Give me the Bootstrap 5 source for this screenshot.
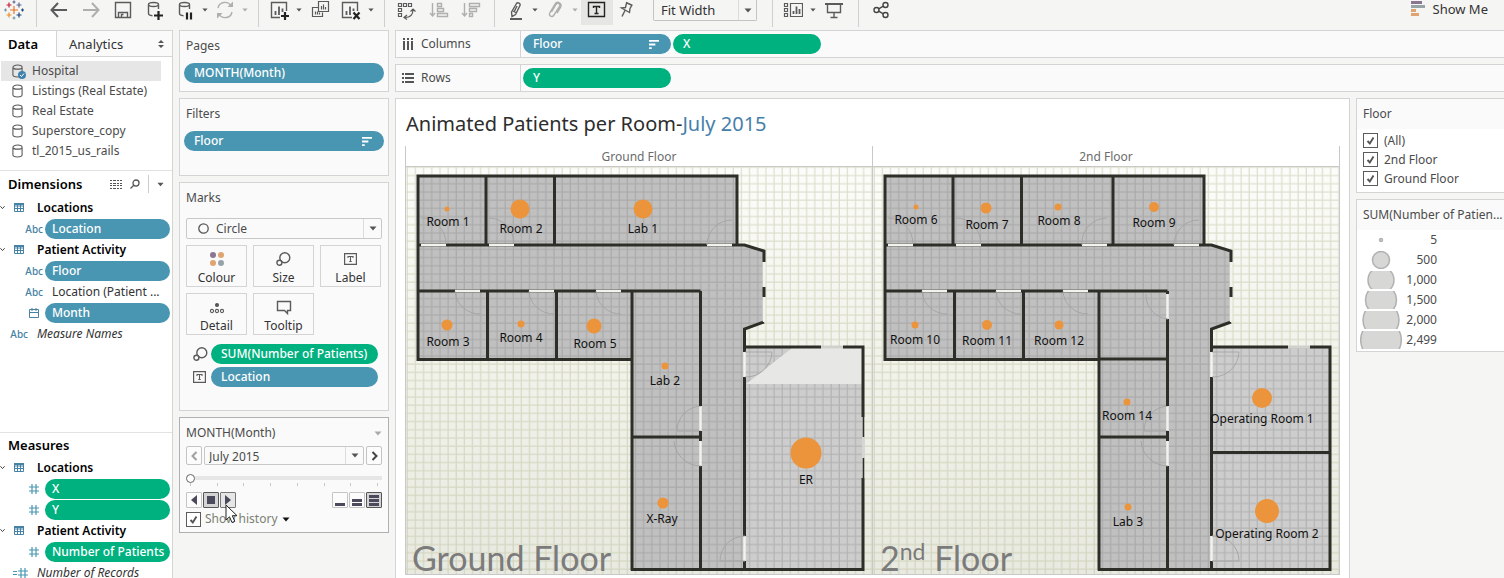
<!DOCTYPE html>
<html lang="en-GB">
<head>
<meta charset="utf-8">
<meta name="viewport" content="width=device-width, initial-scale=1">
<title>Animated Patients per Room</title>
<link href="https://cdn.jsdelivr.net/npm/bootstrap@5.3.0/dist/css/bootstrap.min.css" rel="stylesheet">
<style>
  :root { --line:#d4d4d4; --blue:#4996b2; --green:#00b180; --ink:#4b4b4b; }
  body { font-family:"Noto Sans","Open Sans",sans-serif; font-size:12px; line-height:20px; color:var(--ink); background:#f5f5f3; }
  svg { display:block; flex:none; }
  .ico { fill:none; stroke:#5b5b5b; stroke-width:1.4; }
  .app { height:100vh; overflow:hidden; }

  /* toolbar */
  .toolbar { height:30px; }
  .tool { width:32px; height:25px; padding:0; border:0; border-radius:0; display:flex; justify-content:center; align-items:flex-start; }
  .tool.mid { width:28px; }
  .tool.drop { width:12px; padding-top:8px; }
  .tool.on { background:#e6e6e4; }
  .rule { width:1px; height:27px; background:#cfcfcf; margin:0 6px 0 7px; }
  .rule.far { margin-left:11px; }
  .faded { opacity:.45; }
  .fit { width:104px; height:21px; margin-left:12px; margin-right:8px; border:1px solid #c4c4c4; border-top:0; border-radius:0 0 2px 2px; position:relative; }
  .pick { appearance:none; border:0; background:transparent; width:100%; height:100%; padding:0 24px 0 7px; color:var(--ink); outline:0; }
  .fit .pick { font-size:13px; padding-bottom:4px; color:#333; }
  .arrow { position:absolute; right:0; top:0; bottom:0; width:18px; border-left:1px solid #dcdcdc; display:flex; align-items:center; justify-content:center; pointer-events:none; }
  .showme { font-size:13px; color:#333; padding:0; border:0; line-height:18px; }

  /* data pane */
  .datapane { width:173px; background:#fff; border:solid var(--line); border-width:1px 1px 0 0; }
  .tab { height:26px; border:0; background:transparent; padding:0 8px; font-size:13px; color:#333; text-align:left; }
  .tab.current { width:56px; font-weight:600; color:#000; }
  .tab.other { background:#fafafa; border:solid var(--line); border-width:0 0 1px 1px; padding-left:12px; }
  .source { height:20px; margin:0 11px 0 1px; padding-left:11px; color:var(--ink); text-decoration:none; }
  .source svg { margin-right:6px; }
  .source.current { background:#e6e6e6; }
  .sources { height:114px; padding-top:4px; border-bottom:1px solid #e2e2e2; }
  .heading { font-size:13px; font-weight:600; color:#000; height:26px; padding-left:8px; }
  .divider { width:1px; height:18px; background:#ccc; margin:0 8px; }
  .measures { height:146px; border-top:1px solid #e2e2e2; }
  .measures .heading { height:24px; }
  .tree { list-style:none; margin:0; padding:0; }
  .tree li { height:21px; display:flex; align-items:center; color:#333; }
  .tree .group { font-weight:600; color:#000; gap:9px; }
  .tree .group span { padding-left:4px; }
  .tree .type { width:45px; padding-right:2px; display:flex; justify-content:flex-end; font-size:10px; font-weight:500; color:#4682a4; }
  .tree .type.glyph { padding-right:6px; }
  .tree .calc .type { width:30px; margin-right:7px; }
  .tree .calc { font-style:italic; }
  .tree .plain { padding-left:7px; white-space:nowrap; }
  .pill { height:20px; border:0; border-radius:10px; color:#fff; font-weight:500; padding:0 8px 0 10px; display:flex; align-items:center; justify-content:space-between; line-height:20px; white-space:nowrap; }
  .pill.dim { background:var(--blue); }
  .pill.mea { background:var(--green); }
  .tree .pill { width:125px; padding:0 7px; }

  /* cards */
  .cards { width:210px; margin-left:6px; gap:6px; }
  .panel { background:#fafafa; border:1px solid var(--line); padding:5px 4px; }
  .panel > .pill { margin-top:7px; }
  .panel > h2, .legend h2 { font-size:12px; line-height:20px; font-weight:400; margin:0; padding:0 2px; color:var(--ink); }
  .markbtn { width:61px; height:42px; background:#fafafa; border:1px solid var(--line); border-radius:0; color:#333; padding:4px 0 0; font-size:12px; line-height:16px; display:flex; flex-direction:column; align-items:center; justify-content:space-between; }
  .grid3 { display:grid; grid-template-columns:repeat(3,61px); gap:6px; margin-top:6px; }
  .encoding { margin-top:3px; gap:3px; padding:0 4px 0 7px; }
  .grid3 + .encoding { margin-top:9px; }
  .encoding svg { width:15px; }
  .box { border:1px solid #c8c8c8; position:relative; border-radius:2px; }
  .step { width:16px; height:19px; padding:0; border:1px solid #c4c4c4; background:#fcfcfc; border-radius:2px; display:flex; align-items:center; justify-content:center; }
  .play { width:16px; height:16px; padding:0; border:1px solid #c4c4c4; background:#fcfcfc; border-radius:1px; display:flex; align-items:center; justify-content:center; }
  .play.on { background:#d4d4d4; border-color:#555; }
  .play.hot { background:#e6e6e6; border-color:#777; }
  .slider { appearance:none; width:100%; height:10px; margin:8px 0 0; display:block; background:linear-gradient(#e6e6e6,#e6e6e6) center/100% 4px no-repeat; }
  .slider::-webkit-slider-thumb { appearance:none; width:9px; height:9px; border:1px solid #666; border-radius:50%; background:#fff; }
  .ticks { height:3px; margin:0 4px 6px; }
  .ticks i { width:1px; background:#c8c8c8; }
  .tick { appearance:none; flex:none; width:15px; height:15px; margin:0; border:1px solid #5b5b5b; background:#fff url("data:image/svg+xml,%3Csvg xmlns='http://www.w3.org/2000/svg' viewBox='0 0 13 13'%3E%3Cpath d='M3.5 7l2.3 2.5L9.5 3.5' fill='none' stroke='%23555' stroke-width='1.9'/%3E%3C/svg%3E") center/13px no-repeat; }
  .history { gap:4px; margin-top:2px; color:#7a7f72; line-height:18px; }
  .cursor { position:absolute; left:45px; top:86px; }

  /* shelves and view */
  .shelf { height:28px; background:#fafafa; border:1px solid var(--line); border-right:0; gap:2px; }
  .shelf .shelfname { width:125px; height:26px; border-right:1px solid var(--line); padding-left:6px; gap:7px; }
  .shelf .pill { width:148px; }
  .view { background:#fff; border:1px solid var(--line); border-bottom:0; padding:11px 9px 0; }
  .view h1 { font-size:20px; line-height:28px; font-weight:400; color:#2d2d2d; margin:0 0 8px; padding-left:1px; }
  .view h1 span { color:#4680aa; }
  .panes { border-right:1px solid #c8c8c8; border-bottom:1px solid #c8c8c8; }
  .pane { border-left:1px solid #c8c8c8; }
  .pane h3 { font-size:12px; line-height:18px; height:21px; padding-top:2px; font-weight:400; color:#6b6b6b; margin:0; text-align:center; border-bottom:1px solid #c8c8c8; }
  .pane svg { width:100%; height:auto; overflow:visible; }
  .plan text { font:12px "Noto Sans","Open Sans",sans-serif; fill:#111; text-anchor:middle; }
  .plan text.floorname { font:34px Lato,sans-serif; fill:#7b7b7b; text-anchor:start; }
  .plan text .sup { font-size:23px; }
  .marks circle { fill:#ec943c; }
  .aside { width:148px; gap:6px; }
  .legend { background:#fff; border:1px solid var(--line); border-right:0; }
  .legend h2 { background:#fafafa; padding:5px 0 5px 6px; height:30px; white-space:nowrap; }
  .legend .choices { padding:2px 6px 4px; }
  .legend label { height:19px; gap:6px; }
  .sizes { list-style:none; margin:0; padding:0 0 1px 3px; }
  .sizes li { height:20px; display:flex; align-items:center; }
  .sizes span { width:35px; text-align:right; }
  .sizes circle { fill:#d7d7d5; stroke:#b2b2b2; stroke-width:1.5; }
</style>
</head>
<body>
<svg width="0" height="0" class="position-absolute" aria-hidden="true">
  <symbol id="caret" viewBox="0 0 8 5"><path d="M.5.5h7L4 4.5z"/></symbol>
  <symbol id="db" viewBox="0 0 12 15"><path d="M1 3.3v8.4C1 13 3.200 14 6 14s5-1 5-2.300V3.300M1 3.300C1 2 3.200 1 6 1s5 1 5 2.300S8.800 5.500 6 5.500 1 4.600 1 3.300z" fill="none" stroke="#5b5b5b" stroke-width="1.200"/></symbol>
  <symbol id="sort" viewBox="0 0 11 10"><path d="M0 1h11M0 5h7M0 9h3" stroke="#fff" stroke-width="2"/></symbol>
  <symbol id="chev" viewBox="0 0 6 5"><path d="M.5 1L3 3.800 5.500 1" fill="none" stroke="#444" stroke-width="1.200"/></symbol>
  <symbol id="tbl" viewBox="0 0 10 9"><path d="M.5.5h9v8h-9zM.5 3h9M.5 5.500h9M3.500 2v6.500M6.500 2v6.500" fill="none" stroke="#4682a4"/><path d="M0 0h10v2H0z" fill="#4682a4"/></symbol>
  <symbol id="hash" viewBox="0 0 10 10"><path d="M3 0v10M7 0v10M0 3h10M0 7h10" fill="none" stroke="#4996b2" stroke-width="1.200"/></symbol>
  <symbol id="size" viewBox="0 0 15 14"><circle cx="8.800" cy="5.800" r="5"/><circle cx="3.400" cy="10.700" r="2.500" fill="#fafafa"/></symbol>
  <symbol id="tlabel" viewBox="0 0 13 12"><path d="M.5.5h12v11H.5z"/><path d="M4 5V3.500h5V5M6.500 3.500v5M5.300 8.500h2.400" stroke-width="1.100"/></symbol>

  <pattern id="tiles" width="8.150" height="8.200" patternUnits="userSpaceOnUse" x="408" y="170"><path d="M7.500 0v8.200M0 5.500h8.150" stroke="#b9bc98" stroke-opacity=".45" stroke-width="1.200" fill="none"/></pattern>
  <pattern id="floortiles" width="8.150" height="8.200" patternUnits="userSpaceOnUse" x="408" y="170"><path d="M7.500 0v8.200M0 5.500h8.150" stroke="#777" stroke-opacity=".3" stroke-width="1.200" fill="none"/></pattern>
  <linearGradient id="lawn" x2="0" y2="1"><stop offset="0" stop-color="#fcfcfa"/><stop offset=".5" stop-color="#f1f2ea"/><stop offset="1" stop-color="#e8e9e0"/></linearGradient>

  <!-- floor surface shared by both storeys -->
  <g id="ground">
    <path d="M406 167h466v407H406z" fill="url(#lawn)"/>
    <path d="M406 167h466v407H406z" fill="url(#tiles)"/>
    <path d="M418 176h319v69h8l19 6v71l-19 7v241H632V360H418z" fill="#c0c0c0"/>
    <path d="M745 347h118v223H745z" fill="#cdcdcd"/>
    <path d="M418 176h319v69h8l19 6v71l-19 7v18h118v223H632V360H418z" fill="url(#floortiles)"/>
  </g>
  <g id="walls" fill="none" stroke="#2e2e28" stroke-width="3">
    <path d="M418 361V176H737V245M418 245h326.500l19.500 6v11M764 287v10M764 322l-19.500 7v23M744.500 377v159M744.500 561v8"/>
    <path d="M486 176v69M418 291h282.500M487.500 291v69M556.500 291v69M632 291v279.500M418 359.500H632M700.500 466v104M632 437h68.500"/>
    <path d="M744.500 347H821M843 347h20v70M863 478v91.500H631"/>
    <g stroke="#f2f2ee"><path d="M421 245h25M489 245h25M455 291h25M529 291h25M596 291h25M764 262v25M764 297v25M744.500 352v25M744.500 536v25M700.500 406v25M700.500 441v25" stroke-width="2.500"/><path d="M821 347h22" stroke="#d0d0cc"/></g>
    <g stroke="#a0a0a0" stroke-width="1" stroke-opacity=".8"><path d="M421 218a25 26 0 0 1 25 26M489 218a25 26 0 0 1 25 26M455 291a25 24 0 0 0 25 23M529 291a25 24 0 0 0 25 23M596 291a25 24 0 0 0 25 23M701 406a25 25 0 0 0-24 25h24M701 466a27 27 0 0 1-27-25M745 352h27a26 26 0 0 1-27 25"/></g>
  </g>
</svg>

<div class="app d-flex flex-column">
  <header class="toolbar d-flex align-items-start flex-shrink-0" role="toolbar" aria-label="Toolbar">
    <button class="tool mid btn" aria-label="Start page"><svg width="20" height="20" viewBox="0 0 20 20" fill="none" stroke-width="1.200"><path d="M10 6v8M6 10h8" stroke="#e8762c"/><path d="M5 2.500v5M2.500 5h5" stroke="#c72037"/><path d="M15 2.500v5M12.500 5h5M10 .5v3M8.500 2h3" stroke="#5b6591"/><path d="M5 12.500v5M2.500 15h5" stroke="#eb912c"/><path d="M15 12.500v5M12.500 15h5M17 10h3M18.500 8.500v3" stroke="#1f447e"/><path d="M0 10h3M1.500 8.500v3M10 16.500v3M8.500 18h3" stroke="#7199a6"/></svg></button>
    <span class="rule ms-2"></span>
    <button class="tool btn" aria-label="Undo"><svg class="ico" width="20" height="20" style="stroke-width:2"><path d="M18 10H3M9 3L2.500 10 9 17"/></svg></button>
    <button class="tool btn" aria-label="Redo"><svg class="ico faded" width="20" height="20" style="stroke-width:2"><path d="M2 10h15M11 3l6.500 7L11 17"/></svg></button>
    <button class="tool btn" aria-label="Save"><svg class="ico" width="20" height="20"><path d="M2.500 2.500h15v15h-15zM5.500 17.500v-5h9v5M8.500 17.500v-3h2"/></svg></button>
    <button class="tool btn" aria-label="New data source"><svg class="ico" width="20" height="20"><path d="M3.500 4.500v9c0 1.500 2 2 4 2.200M13.500 9V4.500M3.500 4.500C3.500 3 5.500 2.500 8.500 2.500s5 .5 5 2-2 2-5 2-5-.5-5-2z"/><path d="M13.500 11v9M9 15.500h9" stroke="#222" stroke-width="2.200"/></svg></button>
    <button class="tool mid btn" aria-label="Pause auto updates"><svg class="ico" width="20" height="20"><path d="M4.500 4.500v9c0 1.500 2 2 4 2.200M14.500 9V4.500M4.500 4.500c0-1.500 2-2 5-2s5 .5 5 2-2 2-5 2-5-.5-5-2z"/><path d="M12 12.500v7M16 12.500v7" stroke="#222" stroke-width="2.200"/></svg></button>
    <button class="tool drop btn" aria-label="Update options"><svg width="6" height="4" fill="#555"><use href="#caret"/></svg></button>
    <button class="tool mid btn" aria-label="Refresh"><svg class="ico faded" width="20" height="20"><path d="M3 8a7 7 0 0 1 13-2M17 12a7 7 0 0 1-13 2"/><path d="M12.500 7H18V1.500zM7.500 13H2v5.500z" fill="#5b5b5b" stroke="none"/></svg></button>
    <button class="tool drop btn" aria-label="Refresh options"><svg class="faded" width="6" height="4" fill="#555"><use href="#caret"/></svg></button>
    <span class="rule"></span>
    <button class="tool mid btn" aria-label="New worksheet"><svg class="ico" width="20" height="20"><path d="M11 17.500H2.500v-15h15V11"/><path d="M6.500 15v-4M10 15V6.500M13.500 12V8.500" stroke-width="1.800"/><path d="M16 12v8M12 16h8" stroke="#222" stroke-width="2.200"/></svg></button>
    <button class="tool drop btn" aria-label="New sheet options"><svg width="6" height="4" fill="#555"><use href="#caret"/></svg></button>
    <button class="tool btn" aria-label="Duplicate"><svg class="ico" width="20" height="20" style="stroke-width:1.200"><path d="M7.500 1.500h10v10h-10zM7 7.500H1.500v9h10v-4M10.500 9.500V6M12.500 9.500v-5M14.500 9.500V7M4.500 14.500v-3M6.500 14.500v-3M8.500 14.500v-2"/></svg></button>
    <button class="tool mid btn" aria-label="Clear sheet"><svg class="ico" width="20" height="20"><path d="M11 17.500H1.500v-15h15V11"/><path d="M5.500 15v-4M9 15V6.500M12.500 11V8.500" stroke-width="1.800"/><path d="M12.500 12.500l6 6.500M18.500 12.500l-6 6.500" stroke="#222" stroke-width="2.200"/></svg></button>
    <button class="tool drop btn" aria-label="Clear options"><svg width="6" height="4" fill="#555"><use href="#caret"/></svg></button>
    <span class="rule"></span>
    <button class="tool btn" aria-label="Swap rows and columns"><svg class="ico" width="20" height="20" style="stroke-width:1.200"><path d="M1.500 3.500h3v3h-3zM6.500 3.500h3v3h-3zM11.500 3.500h3v3h-3zM1.500 8.500h3v3h-3zM1.500 13.500h3v3h-3zM8 17.500c5 0 8-3 8-8M13.500 11.500L16 9l2.500 2.500M10 15l-3 2.500 3 2"/></svg></button>
    <button class="tool btn" aria-label="Sort ascending"><svg class="ico faded" width="20" height="20"><path d="M3.500 3v12M1 13l2.500 3L6 13M8.500 3.500h4v3h-4zM8.500 8.500h6v3h-6zM8.500 13.500h10v3h-10z"/></svg></button>
    <button class="tool btn" aria-label="Sort descending"><svg class="ico faded" width="20" height="20"><path d="M3.500 3v12M1 13l2.500 3L6 13M8.500 3.500h10v3h-10zM8.500 8.500h7v3h-7zM8.500 13.500h3v3h-3z"/></svg></button>
    <span class="rule"></span>
    <button class="tool mid btn" aria-label="Highlight"><svg class="ico" width="20" height="20"><path d="M6.500 12l5-8.500c1-1.500 4.500 0 3.500 2l-4.500 9-3.500 2zM8 11l3.500 2M12 6l-2.500 5"/><path d="M5 19h12" stroke-width="2"/></svg></button>
    <button class="tool drop btn" aria-label="Highlight options"><svg width="6" height="4" fill="#555"><use href="#caret"/></svg></button>
    <button class="tool mid btn" aria-label="Group"><svg class="ico faded" width="20" height="20"><path d="M6.500 12l4.500-7.500c1.500-2.300 5-.5 3.500 2L9 15c-2 3-6 1-4-2.500l5-8.500c2-3.500 8-1 5.500 3.500L12 13"/></svg></button>
    <button class="tool drop btn" aria-label="Group options"><svg class="faded" width="6" height="4" fill="#555"><use href="#caret"/></svg></button>
    <button class="tool btn on" aria-label="Show mark labels"><svg class="ico" width="20" height="20" style="stroke:#222"><path d="M1.500 2.500h16v14h-16zM6.500 8V6.500h6V8M9.500 6.500v7M7.500 13.500h4"/></svg></button>
    <button class="tool mid btn" aria-label="Fix axes"><svg class="ico" width="20" height="20"><path d="M9 2.500l6.500 3M9.500 3L8.500 7.500l-4 .5 8 4.500.5-4 2-3.500M8 10.500L5 16.500"/></svg></button>
    <div class="fit"><select class="pick" aria-label="Fit"><option>Fit Width</option></select><span class="arrow"><svg width="8" height="5" fill="#555"><use href="#caret"/></svg></span></div>
    <span class="rule"></span>
    <button class="tool mid btn" aria-label="Show cards"><svg class="ico" width="20" height="20" style="stroke-width:1.200"><path d="M1.500 3.500h3v3h-3zM1.500 8.500h3v3h-3zM1.500 13.500h3v3h-3zM7.500 3.500h12v13h-12z"/><path d="M10.500 14v-3M13.500 14V6.500M16.500 14V9" stroke-width="1.800"/></svg></button>
    <button class="tool drop btn" aria-label="Card options"><svg width="6" height="4" fill="#555"><use href="#caret"/></svg></button>
    <button class="tool mid btn" aria-label="Presentation mode"><svg class="ico" width="20" height="20"><path d="M2 4h18" stroke-width="2"/><path d="M4.500 4v8.500h13V4M11 12.500v5M7.500 17.500h7"/></svg></button>
    <span class="rule far"></span>
    <button class="tool btn" aria-label="Share"><svg class="ico" width="20" height="20" style="stroke:#444"><circle cx="5.500" cy="10" r="2.500"/><circle cx="14.500" cy="5" r="2.500"/><circle cx="14.500" cy="15" r="2.500"/><path d="M7.700 8.800l4.600-2.600M7.700 11.200l4.600 2.600"/></svg></button>
    <button class="showme btn d-flex align-items-center ms-auto me-3"><svg class="me-2" width="14" height="16"><path d="M0 0h11v3H0z" fill="#8b7591"/><path d="M0 4h14v3H0z" fill="#98a3a8"/><path d="M0 8h5v3H0zM0 12h8v3H0z" fill="#e1a470"/></svg>Show Me</button>
  </header>

  <div class="d-flex flex-grow-1" style="min-height:0">
    <aside class="datapane d-flex flex-column flex-shrink-0">
      <div class="d-flex">
        <button class="tab current">Data</button>
        <button class="tab other flex-grow-1 d-flex align-items-center justify-content-between">Analytics<svg width="6" height="8" fill="#555"><path d="M0 3l3-3 3 3zM0 5h6L3 8z"/></svg></button>
      </div>
      <nav class="sources d-flex flex-column flex-shrink-0">
        <a href="#" class="source current d-flex align-items-center"><svg width="14" height="16" viewBox="0 0 14 16"><use href="#db" width="11" height="14" y="1"/><circle cx="10" cy="12" r="4" fill="#3f80ad"/><path d="M8 12l1.500 1.500L12 10.500" stroke="#fff" fill="none"/></svg><span>Hospital</span></a>
        <a href="#" class="source d-flex align-items-center"><svg width="14" height="16"><use href="#db" width="11" height="14" y="1"/></svg><span>Listings (Real Estate)</span></a>
        <a href="#" class="source d-flex align-items-center"><svg width="14" height="16"><use href="#db" width="11" height="14" y="1"/></svg><span>Real Estate</span></a>
        <a href="#" class="source d-flex align-items-center"><svg width="14" height="16"><use href="#db" width="11" height="14" y="1"/></svg><span>Superstore_copy</span></a>
        <a href="#" class="source d-flex align-items-center"><svg width="14" height="16"><use href="#db" width="11" height="14" y="1"/></svg><span>tl_2015_us_rails</span></a>
      </nav>
      <section class="flex-grow-1">
        <div class="heading d-flex align-items-center pe-2"><span class="flex-grow-1">Dimensions</span><svg width="12" height="9" fill="none" stroke="#555"><path d="M0 .5h12M0 3.500h12M0 5.500h12M0 8.500h12" stroke-dasharray="2 1 3 1 2 1 2 0"/></svg><svg class="ms-2" width="10" height="10" fill="none" stroke="#555" stroke-width="1.300"><circle cx="6" cy="4" r="3"/><path d="M4 6L.5 9.500"/></svg><span class="divider"></span><svg width="7" height="5" fill="#555"><use href="#caret"/></svg></div>
        <ul class="tree">
          <li class="group"><svg width="5" height="5"><use href="#chev"/></svg><svg width="10" height="9"><use href="#tbl"/></svg><span>Locations</span></li>
          <li><span class="type">Abc</span><button class="pill dim">Location</button></li>
          <li class="group"><svg width="5" height="5"><use href="#chev"/></svg><svg width="10" height="9"><use href="#tbl"/></svg><span>Patient Activity</span></li>
          <li><span class="type">Abc</span><button class="pill dim">Floor</button></li>
          <li><span class="type">Abc</span><span class="plain">Location (Patient ...</span></li>
          <li><span class="type glyph"><svg width="10" height="10" fill="none" stroke="#4682a4"><path d="M.5 1.500h9v8h-9zM.5 4.500h9M3 0v3M7 0v3"/></svg></span><button class="pill dim">Month</button></li>
          <li class="calc"><span class="type fst-normal">Abc</span>Measure Names</li>
        </ul>
      </section>
      <section class="measures flex-shrink-0">
        <div class="heading d-flex align-items-center">Measures</div>
        <ul class="tree">
          <li class="group"><svg width="5" height="5"><use href="#chev"/></svg><svg width="10" height="9"><use href="#tbl"/></svg><span>Locations</span></li>
          <li><span class="type glyph"><svg width="10" height="10"><use href="#hash"/></svg></span><button class="pill mea">X</button></li>
          <li><span class="type glyph"><svg width="10" height="10"><use href="#hash"/></svg></span><button class="pill mea">Y</button></li>
          <li class="group"><svg width="5" height="5"><use href="#chev"/></svg><svg width="10" height="9"><use href="#tbl"/></svg><span>Patient Activity</span></li>
          <li><span class="type glyph"><svg width="10" height="10"><use href="#hash"/></svg></span><button class="pill mea">Number of Patients</button></li>
          <li class="calc"><span class="type"><svg width="15" height="10"><path d="M0 3.500h4M0 6.500h4" stroke="#4996b2"/><use href="#hash" x="5" width="10" height="10"/></svg></span>Number of Records</li>
        </ul>
      </section>
    </aside>

    <div class="cards d-flex flex-column flex-shrink-0">
      <section class="panel" style="height:62px"><h2>Pages</h2><button class="pill dim w-100">MONTH(Month)</button></section>
      <section class="panel" style="height:78px"><h2>Filters</h2><button class="pill dim w-100">Floor<svg class="me-1" width="10" height="9"><use href="#sort"/></svg></button></section>
      <section class="panel" style="height:229px"><h2>Marks</h2>
        <div style="padding:10px 2px 0">
          <div class="box d-flex align-items-center" style="height:21px;padding-left:11px"><svg width="11" height="11" fill="none" stroke="#555" stroke-width="1.300"><circle cx="5.500" cy="5.500" r="4.700"/></svg><select class="pick" aria-label="Mark type"><option>Circle</option></select><span class="arrow"><svg width="8" height="5" fill="#555"><use href="#caret"/></svg></span></div>
          <div class="grid3">
            <button class="markbtn"><svg width="16" height="18"><circle cx="4" cy="5" r="3" fill="#8b7591"/><circle cx="12" cy="5" r="3" fill="#e1a470"/><circle cx="4" cy="13" r="3" fill="#e1a470"/><circle cx="12" cy="13" r="3" fill="#98a3a8"/></svg>Colour</button>
            <button class="markbtn"><svg class="ico" width="15" height="18"><use href="#size" y="2" width="15" height="14"/></svg>Size</button>
            <button class="markbtn"><svg class="ico" width="13" height="18"><use href="#tlabel" y="3" width="13" height="12"/></svg>Label</button>
            <button class="markbtn"><svg class="ico" width="16" height="18" style="stroke-width:1.1"><circle cx="8" cy="7" r="1.500" fill="#555"/><circle cx="3" cy="13" r="1.600"/><circle cx="8" cy="13" r="1.600"/><circle cx="13" cy="13" r="1.600"/></svg>Detail</button>
            <button class="markbtn"><svg class="ico" width="16" height="18"><path d="M1.500 3.500h13v9h-3v3l-3-3h-7z"/></svg>Tooltip</button>
          </div>
          <div class="encoding d-flex align-items-center"><svg class="ico" height="14"><use href="#size"/></svg><button class="pill mea flex-grow-1">SUM(Number of Patients)</button></div>
          <div class="encoding d-flex align-items-center"><svg class="ico" height="12"><use href="#tlabel" width="13" height="12"/></svg><button class="pill dim flex-grow-1">Location</button></div>
        </div>
      </section>
      <section class="panel position-relative" style="height:116px;border-color:#b0b0b0"><h2 class="d-flex justify-content-between align-items-center">MONTH(Month)<svg width="8" height="5" fill="#aaa"><use href="#caret"/></svg></h2>
        <div style="padding:3px 2px 0">
          <div class="d-flex" style="gap:2px">
            <button class="step" aria-label="Previous"><svg class="faded" width="7" height="10" fill="none" stroke="#333" stroke-width="2"><path d="M5.500 1L1.500 5l4 4"/></svg></button>
            <div class="box flex-grow-1" style="height:19px"><select class="pick align-top ps-1" aria-label="Month"><option>July 2015</option></select><span class="arrow"><svg width="8" height="5" fill="#555"><use href="#caret"/></svg></span></div>
            <button class="step" aria-label="Next"><svg width="7" height="10" fill="none" stroke="#444" stroke-width="2"><path d="M1.500 1l4 4-4 4"/></svg></button>
          </div>
          <input type="range" class="slider" aria-label="Month position" min="0" max="7" value="0">
          <div class="ticks d-flex justify-content-between"><i></i><i></i><i></i><i></i><i></i><i></i><i></i><i></i></div>
          <div class="d-flex" style="gap:1px">
            <button class="play" aria-label="Play backwards"><svg width="6" height="10" fill="#4a4a5c"><path d="M6 0v10L0 5z"/></svg></button>
            <button class="play on" aria-label="Stop"><svg width="8" height="8"><path d="M0 0h8v8H0z" fill="#4a4a5c"/></svg></button>
            <button class="play hot" aria-label="Play"><svg width="6" height="10" fill="#4a4a5c"><path d="M0 0v10l6-5z"/></svg></button>
            <button class="play ms-auto" aria-label="Slow"><svg width="10" height="11" fill="#4a4a5c"><path d="M0 8h10v3H0z"/></svg></button>
            <button class="play" aria-label="Medium"><svg width="10" height="11" fill="#4a4a5c"><path d="M0 8h10v3H0zM0 4h10v3H0z"/></svg></button>
            <button class="play on" aria-label="Fast"><svg width="10" height="11" fill="#4a4a5c"><path d="M0 8h10v3H0zM0 4h10v3H0zM0 0h10v3H0z"/></svg></button>
          </div>
          <label class="history d-flex align-items-center"><input type="checkbox" class="tick" checked>Show history<svg width="8" height="5" fill="#111"><use href="#caret"/></svg></label>
        </div>
        <svg class="cursor" width="13" height="20"><path d="M1 1v15l3.500-3.200L7 18.500l2.800-1.200-2.500-5.600H12z" fill="#fff" stroke="#222"/></svg>
      </section>
    </div>

    <main class="flex-grow-1 d-flex flex-column" style="margin-left:6px;gap:6px;min-width:0">
      <div class="shelf d-flex align-items-center flex-shrink-0"><div class="shelfname d-flex align-items-center"><svg width="12" height="12" fill="#555"><path d="M1 0h2v2H1zM5 0h2v2H5zM9 0h2v2H9zM1 3h2v9H1zM5 3h2v9H5zM9 3h2v9H9z"/></svg>Columns</div><button class="pill dim">Floor<svg class="me-1" width="10" height="9"><use href="#sort"/></svg></button><button class="pill mea">X</button></div>
      <div class="shelf d-flex align-items-center flex-shrink-0"><div class="shelfname d-flex align-items-center"><svg width="12" height="10" fill="#555"><path d="M0 0h2v2H0zM0 4h2v2H0zM0 8h2v2H0zM3 0h9v2H3zM3 4h9v2H3zM3 8h9v2H3z"/></svg>Rows</div><button class="pill mea">Y</button></div>
      <div class="d-flex flex-grow-1" style="gap:6px;min-height:0">
        <section class="view flex-grow-1" style="min-width:0">
          <h1>Animated Patients per Room-<span>July 2015</span></h1>
          <div class="panes row g-0">
            <div class="pane col">
              <h3>Ground Floor</h3>
              <svg class="plan" viewBox="406 167 466 407" role="img" aria-label="Ground floor plan">
                <use href="#ground"/>
                <path d="M746 384l46-36h70v36z" fill="#e7e7e5"/>
                <use href="#walls"/>
                <g fill="none" stroke="#2e2e28" stroke-width="3"><path d="M554.500 176v69M700.500 291v115M700.500 431v10"/><path d="M863.500 417v20M863.500 458v20" stroke-width="1.500"/></g>
                <path d="M862 437h3v21h-3z" fill="#d6d6d2"/>
                <path d="M707 245h25" stroke="#f2f2ee" stroke-width="2.500"/>
                <path d="M707 245a25 25 0 0 1 25-25M745 536a25 25 0 0 0-25 25h25" fill="none" stroke="#a6a6a6"/>
                <g class="marks"><circle cx="447" cy="209" r="2.500"/><circle cx="520" cy="209" r="9.500"/><circle cx="643" cy="209" r="9.500"/><circle cx="447" cy="325" r="5.500"/><circle cx="521" cy="324" r="3.500"/><circle cx="594" cy="326" r="7.500"/><circle cx="665" cy="366" r="3.500"/><circle cx="663" cy="503" r="5.500"/><circle cx="806" cy="453" r="15.500"/></g>
                <text x="448" y="226">Room 1</text><text x="521" y="233">Room 2</text><text x="643" y="233">Lab 1</text><text x="448" y="346">Room 3</text><text x="521" y="342">Room 4</text><text x="595" y="348">Room 5</text><text x="665" y="385">Lab 2</text><text x="662" y="523">X-Ray</text><text x="806" y="484">ER</text>
                <text class="floorname" x="412" y="571">Ground Floor</text>
              </svg>
            </div>
            <div class="pane col">
              <h3>2nd Floor</h3>
              <svg class="plan" viewBox="873 167 466 407" role="img" aria-label="Second floor plan">
                <g transform="translate(467)">
                  <use href="#ground"/><use href="#walls"/>
                  <g fill="none" stroke="#2e2e28" stroke-width="3"><path d="M554.500 176v69M646 176v69M700.500 291v3M700.500 319v87M700.500 431v10M632 359h69M745 452.500h118M863 417v61"/></g>
                  <path d="M615 245h25M707 245h25M700.500 294v25" stroke="#f2f2ee" stroke-width="2.500"/>
                  <path d="M615 245a25 25 0 0 1 25-27M707 245a25 25 0 0 1 25-25M701 319a24 24 0 0 1-22-25M745 536a25 25 0 0 1 27 25h-27" fill="none" stroke="#a6a6a6"/>
                </g>
                <g class="marks"><circle cx="916" cy="207" r="2.500"/><circle cx="986" cy="208" r="5.500"/><circle cx="1058" cy="207" r="3.500"/><circle cx="1154" cy="207" r="5"/><circle cx="915" cy="325" r="3.500"/><circle cx="987" cy="325" r="5"/><circle cx="1059" cy="325" r="4.500"/><circle cx="1127" cy="402" r="3.500"/><circle cx="1128" cy="507" r="3.500"/><circle cx="1262" cy="398" r="10"/><circle cx="1267" cy="511" r="12"/></g>
                <text x="916" y="224">Room 6</text><text x="987" y="229">Room 7</text><text x="1059" y="225">Room 8</text><text x="1154" y="227">Room 9</text><text x="915" y="344">Room 10</text><text x="987" y="345">Room 11</text><text x="1059" y="345">Room 12</text><text x="1127" y="420">Room 14</text><text x="1128" y="526">Lab 3</text><text x="1262" y="423">Operating Room 1</text><text x="1267" y="538">Operating Room 2</text>
                <text class="floorname" x="880" y="571">2<tspan class="sup" dy="-11">nd</tspan><tspan dy="11"> Floor</tspan></text>
              </svg>
            </div>
          </div>
        </section>
        <aside class="aside d-flex flex-column flex-shrink-0">
          <section class="legend"><h2>Floor</h2>
            <div class="choices">
              <label class="d-flex align-items-center"><input type="checkbox" class="tick" checked>(All)</label>
              <label class="d-flex align-items-center"><input type="checkbox" class="tick" checked>2nd Floor</label>
              <label class="d-flex align-items-center"><input type="checkbox" class="tick" checked>Ground Floor</label>
            </div>
          </section>
          <section class="legend"><h2>SUM(Number of Patien...</h2>
            <ul class="sizes">
              <li><svg width="42" height="18"><circle cx="21" cy="9" r="1.500"/></svg><span>5</span></li>
              <li><svg width="42" height="18"><circle cx="21" cy="9" r="8.500"/></svg><span>500</span></li>
              <li><svg width="42" height="18"><circle cx="21" cy="9" r="13"/></svg><span>1,000</span></li>
              <li><svg width="42" height="18"><circle cx="21" cy="9" r="15.500"/></svg><span>1,500</span></li>
              <li><svg width="42" height="18"><circle cx="21" cy="9" r="18"/></svg><span>2,000</span></li>
              <li><svg width="42" height="18"><circle cx="21" cy="9" r="20.300"/></svg><span>2,499</span></li>
            </ul>
          </section>
        </aside>
      </div>
    </main>
  </div>
</div>
<script src="https://cdn.jsdelivr.net/npm/bootstrap@5.3.0/dist/js/bootstrap.bundle.min.js"></script>
</body>
</html>
